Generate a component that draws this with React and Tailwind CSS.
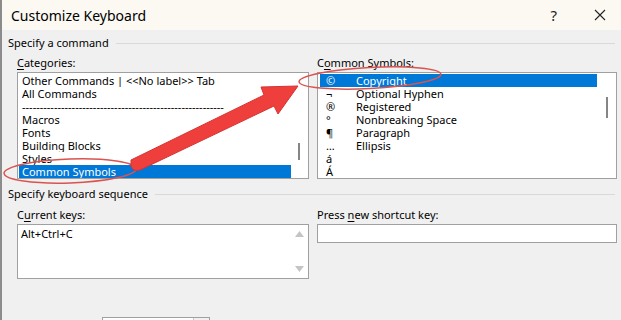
import React from "react";

const font = { fontFamily: '"Segoe UI", "Noto Sans", "Liberation Sans", sans-serif' };

const categories = [
  "Other Commands | <<No label>> Tab",
  "All Commands",
  "---------------------------------------------------------",
  "Macros",
  "Fonts",
  "Building Blocks",
  "Styles",
  "Common Symbols",
];

const symbols = [
  ["©", "Copyright"],
  ["¬", "Optional Hyphen"],
  ["®", "Registered"],
  ["°", "Nonbreaking Space"],
  ["¶", "Paragraph"],
  ["…", "Ellipsis"],
  ["á", ""],
  ["Á", ""],
];

/* group caption with the etched line running to the right */
function GroupHeader({ children }) {
  return (
    <div className="flex items-center h-[16px] pl-[6px] pr-[6px]">
      <span className="mr-[7px]">{children}</span>
      <div className="flex-1 border-t border-[#d9d9d9]" />
    </div>
  );
}

function Label({ before, u, after }) {
  return (
    <div className="h-[16px] leading-[16px]">
      {before}
      <span className="underline underline-offset-2">{u}</span>
      {after}
    </div>
  );
}

export default function App() {
  return (
    <div
      className="relative w-[621px] h-[320px] overflow-hidden bg-[#f0f0f0] text-black text-[11px] border-l-2 border-[#8c8c8c]"
      style={font}
    >
      {/* TITLE BAR */}
      <div className="h-[30px] bg-[#fbf9f2] flex items-center pl-[9px] pr-[12px]">
        <span className="text-[14px] flex-1">Customize Keyboard</span>
        <span className="text-[15px] text-[#222] mr-[37px]">?</span>
        <svg width="12" height="12" viewBox="0 0 12 12" className="mr-[3px]">
          <path d="M1 1 L11 11 M11 1 L1 11" stroke="#222" strokeWidth="1.1" />
        </svg>
      </div>

      <div className="pt-[5px] leading-[16px]">
        <GroupHeader>Specify a command</GroupHeader>

        {/* COMMAND LISTS */}
        <div className="grid grid-cols-[292px_300px] gap-[8px] pl-[15px] mt-[4px]">
          <div>
            <Label u="C" after="ategories:" />
            <div className="relative mt-[1px] h-[107px] bg-white border border-[#a0a0a0] pt-[1px] pl-[1px] pr-[17px] leading-[13px]">
              {categories.map((c, i) => (
                <div
                  key={i}
                  className={
                    "h-[13px] pl-[3px] whitespace-nowrap overflow-hidden " +
                    (i === categories.length - 1 ? "bg-[#0078d7] text-white" : "")
                  }
                >
                  {c}
                </div>
              ))}
              <div className="absolute right-[8px] top-[70px] w-[2px] h-[17px] bg-[#858585]" />
            </div>
          </div>

          <div>
            <Label before="C" u="o" after="mmon Symbols:" />
            <div className="relative mt-[1px] h-[107px] bg-white border border-[#a0a0a0] pt-[1px] pl-[2px] pr-[19px] leading-[13px]">
              {symbols.map(([s, n], i) => (
                <div
                  key={i}
                  className={"h-[13px] flex " + (i === 0 ? "bg-[#0078d7] text-white" : "")}
                >
                  <span className="w-[36px] pl-[6px]">{s}</span>
                  <span>{n}</span>
                </div>
              ))}
              <div className="absolute right-[8px] top-[24px] w-[2px] h-[21px] bg-[#858585]" />
            </div>
          </div>
        </div>

        <div className="mt-[7px]">
          <GroupHeader>Specify keyboard sequence</GroupHeader>
        </div>

        {/* KEY SEQUENCE */}
        <div className="grid grid-cols-[292px_300px] gap-[8px] pl-[15px] mt-[5px]">
          <div>
            <Label before="C" u="u" after="rrent keys:" />
            <div className="mt-[1px] h-[55px] bg-white border border-[#a0a0a0] flex">
              <div className="flex-1 pl-[3px] pt-[1px] leading-[15px]">Alt+Ctrl+C</div>
              <div className="w-[17px] flex flex-col justify-between items-center py-[6px]">
                <svg width="9" height="6" viewBox="0 0 9 6">
                  <path d="M0 6 L4.5 0 L9 6 Z" fill="#c4c4c4" />
                </svg>
                <svg width="9" height="6" viewBox="0 0 9 6">
                  <path d="M0 0 L4.5 6 L9 0 Z" fill="#c4c4c4" />
                </svg>
              </div>
            </div>
          </div>

          <div>
            <Label before="Press " u="n" after="ew shortcut key:" />
            <div className="mt-[1px] h-[19px] bg-white border border-[#a0a0a0]" />
          </div>
        </div>

        {/* partially visible control at the bottom */}
        <div className="ml-[100px] mt-[38px] w-[108px] h-[10px] bg-white border border-[#a0a0a0] flex justify-end">
          <div className="w-[16px] border-l border-[#c8c8c8] bg-[#f0f0f0]" />
        </div>
      </div>

      {/* ANNOTATION OVERLAY */}
      <svg className="absolute left-0 top-0 pointer-events-none" width="621" height="320" viewBox="0 0 621 320">
        <ellipse cx="68" cy="171" rx="66" ry="12" fill="none" stroke="#d9534f" strokeWidth="1.5" transform="rotate(-2 68 171)" />
        <ellipse cx="368" cy="78" rx="71" ry="10.5" fill="none" stroke="#d9534f" strokeWidth="1.5" transform="rotate(-3 368 78)" />
        <path
          d="M129 160 L262 95 L259 87 L296 86 L276 114 L272 106 L138 170 Q131 172 129 166 Z"
          fill="#ee3f3c"
          stroke="#d63331"
          strokeWidth="1"
          strokeLinejoin="round"
        />
      </svg>
    </div>
  );
}
